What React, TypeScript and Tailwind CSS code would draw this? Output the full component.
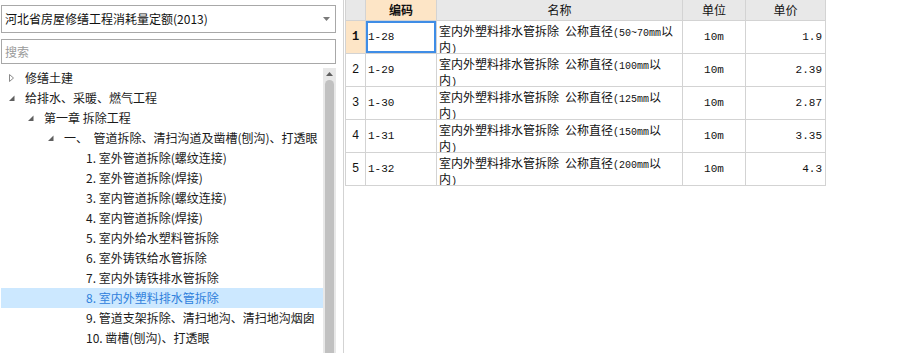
import React from 'react';

type TreeItem = {
  level: 0 | 1 | 2 | 3;
  label: string;
  arrow?: 'open' | 'closed';
  selected?: boolean;
};

const treeItems: TreeItem[] = [
  { level: 0, label: '修缮土建', arrow: 'closed' },
  { level: 0, label: '给排水、采暖、燃气工程', arrow: 'open' },
  { level: 1, label: '第一章 拆除工程', arrow: 'open' },
  { level: 2, label: '一、\u00a0\u00a0管道拆除、清扫沟道及凿槽(刨沟)、打透眼', arrow: 'open' },
  { level: 3, label: '1. 室外管道拆除(螺纹连接)' },
  { level: 3, label: '2. 室外管道拆除(焊接)' },
  { level: 3, label: '3. 室内管道拆除(螺纹连接)' },
  { level: 3, label: '4. 室内管道拆除(焊接)' },
  { level: 3, label: '5. 室内外给水塑料管拆除' },
  { level: 3, label: '6. 室外铸铁给水管拆除' },
  { level: 3, label: '7. 室内外铸铁排水管拆除' },
  { level: 3, label: '8. 室内外塑料排水管拆除', selected: true },
  { level: 3, label: '9. 管道支架拆除、清扫地沟、清扫地沟烟囱' },
  { level: 3, label: '10. 凿槽(刨沟)、打透眼' },
];

// indentation per tree level (leaves have no arrow box)
const indent: Record<number, string> = {
  0: 'pl-[6px]',
  1: 'pl-[25px]',
  2: 'pl-[45px]',
  3: 'pl-[85px]',
};

const rows = [
  { code: '1-28', size: '50~70mm', unit: '10m', price: '1.9' },
  { code: '1-29', size: '100mm', unit: '10m', price: '2.39' },
  { code: '1-30', size: '125mm', unit: '10m', price: '2.87' },
  { code: '1-31', size: '150mm', unit: '10m', price: '3.35' },
  { code: '1-32', size: '200mm', unit: '10m', price: '4.3' },
];

function Arrow({ type }: { type?: 'open' | 'closed' }) {
  if (type === 'closed') {
    return (
      <svg width="8" height="10" viewBox="0 0 8 10">
        <polygon points="1.5,1.5 5.5,5 1.5,8.5" fill="#ffffff" stroke="#8a8a8a" strokeWidth="1" />
      </svg>
    );
  }
  if (type === 'open') {
    return (
      <svg width="8" height="10" viewBox="0 0 8 10">
        <polygon points="6.5,2.5 6.5,8 1,8" fill="#5f5f5f" />
      </svg>
    );
  }
  return null;
}

function TreeRow({ item }: { item: TreeItem }) {
  return (
    <div
      className={`flex h-[20px] items-center whitespace-nowrap ${indent[item.level]} ${
        item.selected ? 'bg-[#cce8ff] text-[#2f80dc]' : 'text-[#1a1a1a]'
      }`}
    >
      {item.level < 3 && (
        <span className="flex w-[18px] items-center justify-start pl-[1px]">
          <Arrow type={item.arrow} />
        </span>
      )}
      <span>{item.label}</span>
    </div>
  );
}

const cell = 'border-r border-b border-[#d3d3d3]';

export default function App() {
  return (
    <div className="flex h-[353px] w-[914px] overflow-hidden bg-white text-[12px] font-['Noto_Sans_CJK_SC',sans-serif]">
      {/* Left: quota tree */}
      <div className="flex w-[343px] shrink-0 flex-col pl-px pt-[5px]">
        <div className="flex h-[28px] w-[335px] items-center justify-between border border-[#a8a8a8] pl-[3px] pr-[5px] text-[#111]">
          <span>河北省房屋修缮工程消耗量定额(2013)</span>
          <svg width="7" height="4" viewBox="0 0 7 4">
            <polygon points="0,0 7,0 3.5,4" fill="#7a7a7a" />
          </svg>
        </div>
        <div className="mt-[6px] flex h-[25px] w-[335px] items-center border border-[#a8a8a8] pl-[3px] text-[#9a9a9a]">
          搜索
        </div>
        <div className="mt-[4px] flex min-h-0 w-[335px] flex-1">
          <div className="flex-1 overflow-hidden">
            {treeItems.map((item, i) => (
              <TreeRow key={i} item={item} />
            ))}
          </div>
          <div className="flex w-[13px] flex-col items-center bg-[#e8e8e8]">
            <div className="flex h-[11px] items-center justify-center pt-[1px]">
              <svg width="7" height="4" viewBox="0 0 7 4">
                <polygon points="3.5,0 7,4 0,4" fill="#606060" />
              </svg>
            </div>
            <div className="mt-[1px] w-[9px] flex-1 rounded-t-full bg-[#c1c1c1]" />
          </div>
        </div>
      </div>

      {/* Right: quota table */}
      <div className="flex-1 border-l border-[#d3d3d3] pl-px">
        <div className="w-[481px] border-l border-[#d3d3d3] text-[#111]">
          <div className="grid h-[21px] grid-cols-[20px_71px_246px_63px_80px] bg-[#e8e8e8]">
            <div className={cell} />
            <div className={`${cell} flex items-center justify-center bg-[#fde5c6] font-bold`}>编码</div>
            <div className={`${cell} flex items-center justify-center`}>名称</div>
            <div className={`${cell} flex items-center justify-center`}>单位</div>
            <div className={`${cell} flex items-center justify-center`}>单价</div>
          </div>
          {rows.map((r, i) => (
            <div key={r.code} className="grid h-[33px] grid-cols-[20px_71px_246px_63px_80px]">
              <div
                className={`${cell} flex items-center justify-center font-['Liberation_Mono',monospace] text-[12px] ${
                  i === 0 ? 'bg-[#fde5c6] font-bold' : ''
                }`}
              >
                {i + 1}
              </div>
              <div
                className={`${cell} flex items-center pl-[2px] font-['Liberation_Mono',monospace] text-[11px] ${
                  i === 0 ? 'shadow-[inset_0_0_0_2px_#3f8de6]' : ''
                }`}
              >
                {r.code}
              </div>
              <div className={`${cell} overflow-x-hidden whitespace-nowrap pl-[2px] pt-[3px] leading-[13px]`}>
                <div>
                  室内外塑料排水管拆除{'\u2002'}公称直径
                  <span className="font-['Liberation_Mono',monospace] text-[10px]">({r.size}</span>以
                </div>
                <div>
                  内<span className="font-['Liberation_Mono',monospace] text-[10px]">)</span>
                </div>
              </div>
              <div className={`${cell} flex items-center justify-center pt-[1px] font-['Liberation_Mono',monospace] text-[11px]`}>
                {r.unit}
              </div>
              <div className={`${cell} flex items-center justify-end pr-[3px] pt-[1px] font-['Liberation_Mono',monospace] text-[11px]`}>
                {r.price}
              </div>
            </div>
          ))}
        </div>
      </div>
    </div>
  );
}
